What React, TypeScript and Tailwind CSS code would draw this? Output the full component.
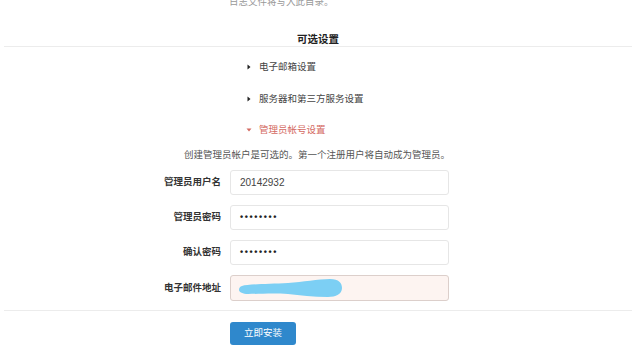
import React from 'react'

const FONT = { fontFamily: '"Liberation Sans", "Noto Sans CJK SC", sans-serif' }

const FIELDS = [
  { label: '管理员用户名', value: '20142932', kind: 'text' },
  { label: '管理员密码', value: '••••••••', kind: 'pass' },
  { label: '确认密码', value: '••••••••', kind: 'pass' },
  { label: '电子邮件地址', value: '', kind: 'email' },
]

function Caret({ open }: { open?: boolean }) {
  if (open) {
    return (
      <svg width="6" height="6" viewBox="0 0 6 6" className="shrink-0">
        <path d="M0.5 1.5 L5.5 1.5 L3 4.5 Z" fill="#d46a62" />
      </svg>
    )
  }
  return (
    <svg width="6" height="6" viewBox="0 0 6 6" className="shrink-0">
      <path d="M1.5 0.5 L4.5 3 L1.5 5.5 Z" fill="#222" />
    </svg>
  )
}

function Scribble() {
  return (
    <svg width="106" height="20" viewBox="0 0 106 20" className="ml-[7px]">
      <path
        d="M4 8 C10 6 30 6 50 5 C65 4 80 1 92 1 C101 1 104 5 104 10 C104 16 98 19 90 19 C75 19 62 17 50 16 C35 15 20 16 10 16 C5 16 1 14 1 12 C1 10 2 8.5 4 8 Z"
        fill="#7ccff4"
      />
    </svg>
  )
}

export default function App() {
  return (
    <div className="w-[640px] h-[354px] overflow-hidden bg-white" style={FONT}>
      <p className="mt-[-4px] pl-[229px] text-[9.5px] leading-[12px] text-[#999]">日志文件将写入此目录。</p>

      <div className="mx-[4px] mt-[25px] w-[628px] border-b border-[#ececec] pb-[1px] text-center text-[10.5px] leading-[12px]">
        <span className="font-bold text-[#222]">可选设置</span>
      </div>

      <div className="pl-[246px] text-[9.5px] leading-[12px]">
        <div className="mt-[14px] flex items-center gap-[7px] text-[#444]">
          <Caret />
          <span>电子邮箱设置</span>
        </div>
        <div className="mt-[20px] flex items-center gap-[7px] text-[#444]">
          <Caret />
          <span>服务器和第三方服务设置</span>
        </div>
        <div className="mt-[19px] flex items-center gap-[7px] text-[#d46a62]">
          <Caret open />
          <span>管理员帐号设置</span>
        </div>
      </div>

      <p className="mt-[13px] pl-[184px] text-[9.5px] leading-[12px] text-[#555]">
        创建管理员帐户是可选的。第一个注册用户将自动成为管理员。
      </p>

      <div className="mt-[9px] flex flex-col gap-[10px]">
        {FIELDS.map((f) => (
          <div key={f.label} className="flex items-center">
            <label className="w-[222px] pr-[1px] text-right text-[9.5px] font-bold text-[#333]">{f.label}</label>
            <div
              className={
                f.kind === 'email'
                  ? 'ml-[8px] flex h-[26px] w-[219px] items-center rounded-[3px] border border-[#dccfcb] bg-[#fdf4f1]'
                  : 'ml-[8px] flex h-[25px] w-[219px] items-center rounded-[3px] border border-[#e6e6e6] bg-white pl-[9px]'
              }
            >
              {f.kind === 'text' && <span className="text-[10px] text-[#444]">{f.value}</span>}
              {f.kind === 'pass' && (
                <span className="text-[9px] font-bold tracking-[1.6px] text-[#222]">{f.value}</span>
              )}
              {f.kind === 'email' && <Scribble />}
            </div>
          </div>
        ))}
      </div>

      <div className="mx-[4px] mt-[9px] h-px w-[628px] bg-[#ececec]" />

      <div className="mt-[11px] pl-[230px]">
        <button className="flex h-[23px] w-[66px] items-center justify-center rounded-[3px] bg-[#2f88cc] text-[9.5px] text-white">
          立即安装
        </button>
      </div>
    </div>
  )
}
